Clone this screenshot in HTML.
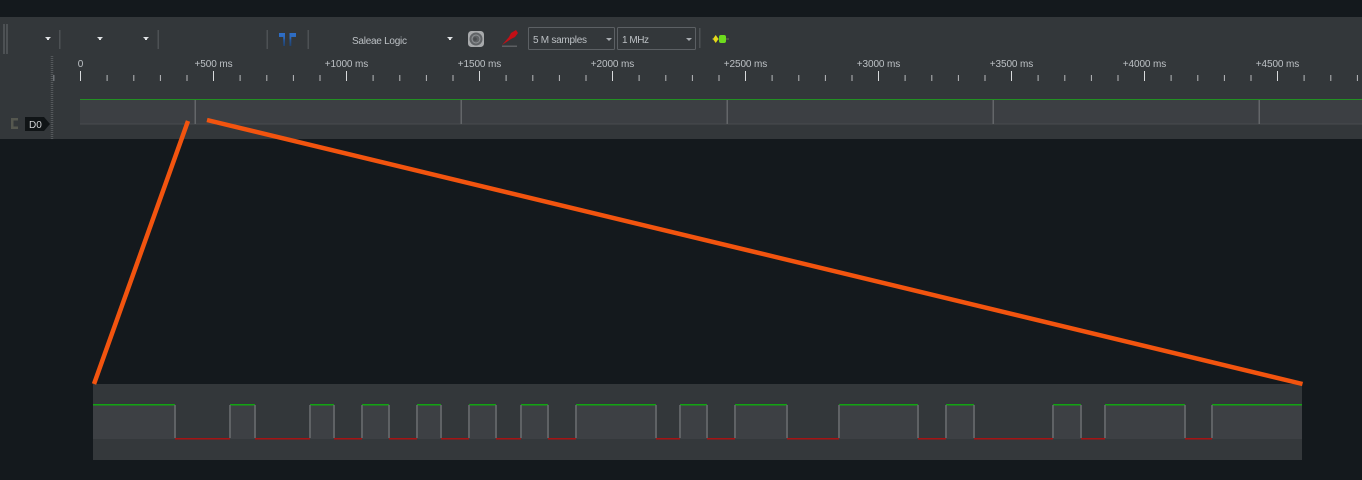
<!DOCTYPE html>
<html>
<head>
<meta charset="utf-8">
<style>
html,body{margin:0;padding:0;background:#14191d;width:1362px;height:480px;overflow:hidden}
svg{display:block}
text{font-family:"Liberation Sans",sans-serif;font-size:10px;fill:#bcc0c4}
</style>
</head>
<body>
<svg width="1362" height="480" viewBox="0 0 1362 480" xmlns="http://www.w3.org/2000/svg">
<defs>
<linearGradient id="pin" x1="0" y1="0" x2="0" y2="1">
<stop offset="0" stop-color="#2f6fc8"/>
<stop offset=".4" stop-color="#2c68ba"/>
<stop offset=".55" stop-color="#255496"/>
<stop offset="1" stop-color="#20426f"/>
</linearGradient>
<g id="t">
<rect x="0" y="71" width="1" height="10" fill="#d8dadc"/>
<rect x="26.600" y="75" width="1" height="6" fill="#b8babc"/>
<rect x="53.300" y="75" width="1" height="6" fill="#b8babc"/>
<rect x="79.900" y="75" width="1" height="6" fill="#b8babc"/>
<rect x="106.500" y="75" width="1" height="6" fill="#b8babc"/>
</g>
</defs>
<rect width="1362" height="480" fill="#14191d"/>
<rect y="17" width="1362" height="122" fill="#33373a"/>
<!-- separators -->
<g fill="#4d5154">
<rect x="3" y="24" width="2" height="30"/>
<rect x="6" y="24" width="2" height="30"/>
<rect x="59" y="30" width="1.500" height="19"/>
<rect x="157.500" y="30" width="1.500" height="19"/>
<rect x="266.500" y="30" width="1.500" height="19"/>
<rect x="307.500" y="30" width="1.500" height="19"/>
<rect x="699" y="28" width="1.500" height="20"/>
</g>
<!-- dropdown arrows -->
<g fill="#e0e2e4">
<path d="M45 37h6l-2 2v1h-2v-1z"/>
<path d="M97 37h6l-2 2v1h-2v-1z"/>
<path d="M143 37h6l-2 2v1h-2v-1z"/>
<path d="M447 37h6l-2 2v1h-2v-1z"/>
</g>
<!-- blue pins -->
<path d="M279 33h6v13h-1.800v-9h-4.200z" fill="url(#pin)"/>
<path d="M296 33h-6.500v13h1.800v-9h4.700z" fill="url(#pin)"/>
<!-- Saleae -->
<text x="352" y="44" textLength="55">Saleae Logic</text>
<!-- device icon -->
<rect x="468" y="31" width="16" height="16" rx="3.500" fill="#a8aaac"/>
<circle cx="476" cy="39" r="6.500" fill="#606366"/>
<circle cx="476" cy="39" r="4" fill="none" stroke="#909396" stroke-width="1"/>
<circle cx="475" cy="39" r="1.800" fill="#4a4d50"/>
<!-- probe icon -->
<path d="M502 45l7-8 2-4 5-3 2 3-3 4-4 2z" fill="#c40f16"/>
<rect x="502" y="45.500" width="15" height="1.500" fill="#5c5f62"/>
<!-- combo boxes -->
<rect x="528.500" y="27.500" width="86" height="22" rx="1" fill="#33373a" stroke="#5c6064"/>
<rect x="617.500" y="27.500" width="78" height="22" rx="1" fill="#33373a" stroke="#5c6064"/>
<path d="M606 38h6l-3 3z" fill="#a8acb0"/>
<path d="M686 38h6l-3 3z" fill="#a8acb0"/>
<text x="533" y="43" textLength="54">5 M samples</text>
<text x="622" y="43" textLength="27">1 MHz</text>
<!-- run icon -->
<rect x="712" y="38.500" width="17" height="1" fill="#6e7a50"/>
<path d="M715.700 35l2.800 4-2.800 4-2.800-4z" fill="#e6d81a"/>
<rect x="719" y="35" width="7" height="8" rx="2" fill="#6edc1e"/>
<!-- vertical ruler -->
<path d="M52 56v83" stroke="#6a6e72" stroke-width="2.500" stroke-dasharray="1 1" opacity=".6"/>
<rect x="53" y="75" width="1.500" height="6" fill="#6e7276"/>
<!-- ruler ticks -->
<use href="#t" x="80"/><use href="#t" x="213"/><use href="#t" x="346"/><use href="#t" x="479"/><use href="#t" x="612"/>
<use href="#t" x="745"/><use href="#t" x="878"/><use href="#t" x="1011"/><use href="#t" x="1144"/><use href="#t" x="1277"/>
<!-- labels -->
<g text-anchor="middle" style="letter-spacing:-.1px">
<text x="80.500" y="67">0</text>
<text x="213.500" y="67">+500 ms</text>
<text x="346.500" y="67">+1000 ms</text>
<text x="479.500" y="67">+1500 ms</text>
<text x="612.500" y="67">+2000 ms</text>
<text x="745.500" y="67">+2500 ms</text>
<text x="878.500" y="67">+3000 ms</text>
<text x="1011.500" y="67">+3500 ms</text>
<text x="1144.500" y="67">+4000 ms</text>
<text x="1277.500" y="67">+4500 ms</text>
</g>
<!-- top track -->
<rect x="80" y="99" width="1282" height="25" fill="#3c3f43"/>
<rect x="80" y="99" width="1282" height="1" fill="#239023"/>
<rect x="80" y="123.500" width="1282" height="1" fill="#484b4f"/>
<g fill="#636669">
<rect x="194.500" y="100" width="1.500" height="24"/>
<rect x="460.500" y="100" width="1.500" height="24"/>
<rect x="726.500" y="100" width="1.500" height="24"/>
<rect x="992.500" y="100" width="1.500" height="24"/>
<rect x="1258.500" y="100" width="1.500" height="24"/>
</g>
<!-- D0 label -->
<path d="M11 118h7v2.500h-4.500v6h4.500v2.500h-7z" fill="#55574f"/>
<path d="M25 117h19l6 7-6 7h-19z" fill="#101416"/>
<text x="29" y="128" style="fill:#d0d2d4">D0</text>
<!-- bottom panel -->
<rect x="93" y="384" width="1209" height="76" fill="#33373a"/>
<rect x="93" y="439" width="1209" height="21" fill="#34383b"/>
<g fill="#3d4044">
<rect x="93" y="405" width="82" height="34"/>
<rect x="230" y="405" width="25" height="34"/>
<rect x="310" y="405" width="24" height="34"/>
<rect x="362" y="405" width="27" height="34"/>
<rect x="417" y="405" width="24" height="34"/>
<rect x="469" y="405" width="27" height="34"/>
<rect x="521" y="405" width="27" height="34"/>
<rect x="576" y="405" width="80" height="34"/>
<rect x="680" y="405" width="27" height="34"/>
<rect x="735" y="405" width="52" height="34"/>
<rect x="839" y="405" width="79" height="34"/>
<rect x="946" y="405" width="28" height="34"/>
<rect x="1053" y="405" width="28" height="34"/>
<rect x="1105" y="405" width="80" height="34"/>
<rect x="1212" y="405" width="90" height="34"/>
</g>
<g fill="#12a412">
<rect x="93" y="404" width="82" height="1.500"/>
<rect x="230" y="404" width="25" height="1.500"/>
<rect x="310" y="404" width="24" height="1.500"/>
<rect x="362" y="404" width="27" height="1.500"/>
<rect x="417" y="404" width="24" height="1.500"/>
<rect x="469" y="404" width="27" height="1.500"/>
<rect x="521" y="404" width="27" height="1.500"/>
<rect x="576" y="404" width="80" height="1.500"/>
<rect x="680" y="404" width="27" height="1.500"/>
<rect x="735" y="404" width="52" height="1.500"/>
<rect x="839" y="404" width="79" height="1.500"/>
<rect x="946" y="404" width="28" height="1.500"/>
<rect x="1053" y="404" width="28" height="1.500"/>
<rect x="1105" y="404" width="80" height="1.500"/>
<rect x="1212" y="404" width="90" height="1.500"/>
</g>
<g fill="#a51414">
<rect x="175" y="438" width="55" height="1.500"/>
<rect x="255" y="438" width="55" height="1.500"/>
<rect x="334" y="438" width="28" height="1.500"/>
<rect x="389" y="438" width="28" height="1.500"/>
<rect x="441" y="438" width="28" height="1.500"/>
<rect x="496" y="438" width="25" height="1.500"/>
<rect x="548" y="438" width="28" height="1.500"/>
<rect x="656" y="438" width="24" height="1.500"/>
<rect x="707" y="438" width="28" height="1.500"/>
<rect x="787" y="438" width="52" height="1.500"/>
<rect x="918" y="438" width="28" height="1.500"/>
<rect x="974" y="438" width="79" height="1.500"/>
<rect x="1081" y="438" width="24" height="1.500"/>
<rect x="1185" y="438" width="27" height="1.500"/>
</g>
<g fill="#5f6265">
<rect x="174" y="405" width="2" height="33"/>
<rect x="229" y="405" width="2" height="33"/><rect x="254" y="405" width="2" height="33"/>
<rect x="309" y="405" width="2" height="33"/><rect x="333" y="405" width="2" height="33"/>
<rect x="361" y="405" width="2" height="33"/><rect x="388" y="405" width="2" height="33"/>
<rect x="416" y="405" width="2" height="33"/><rect x="440" y="405" width="2" height="33"/>
<rect x="468" y="405" width="2" height="33"/><rect x="495" y="405" width="2" height="33"/>
<rect x="520" y="405" width="2" height="33"/><rect x="547" y="405" width="2" height="33"/>
<rect x="575" y="405" width="2" height="33"/><rect x="655" y="405" width="2" height="33"/>
<rect x="679" y="405" width="2" height="33"/><rect x="706" y="405" width="2" height="33"/>
<rect x="734" y="405" width="2" height="33"/><rect x="786" y="405" width="2" height="33"/>
<rect x="838" y="405" width="2" height="33"/><rect x="917" y="405" width="2" height="33"/>
<rect x="945" y="405" width="2" height="33"/><rect x="973" y="405" width="2" height="33"/>
<rect x="1052" y="405" width="2" height="33"/><rect x="1080" y="405" width="2" height="33"/>
<rect x="1104" y="405" width="2" height="33"/><rect x="1184" y="405" width="2" height="33"/>
<rect x="1211" y="405" width="2" height="33"/>
</g>
<!-- orange zoom lines -->
<g stroke="#f2540f" stroke-width="4.500" fill="none">
<line x1="188" y1="121" x2="94" y2="384"/>
<line x1="207" y1="120" x2="1302.500" y2="384"/>
</g>
</svg>
</body>
</html>
